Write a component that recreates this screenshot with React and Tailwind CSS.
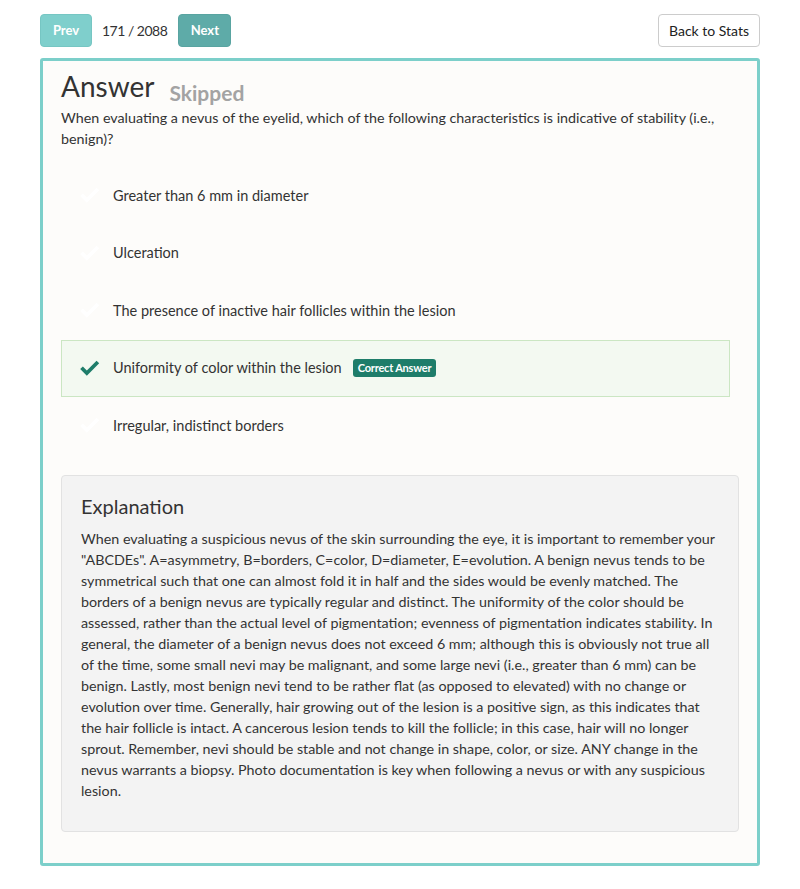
import React from "react";

const options = [
  "Greater than 6 mm in diameter",
  "Ulceration",
  "The presence of inactive hair follicles within the lesion",
  "Uniformity of color within the lesion",
  "Irregular, indistinct borders",
];

const explanation = [
  "When evaluating a suspicious nevus of the skin surrounding the eye, it is important to remember your",
  "\"ABCDEs\". A=asymmetry, B=borders, C=color, D=diameter, E=evolution. A benign nevus tends to be",
  "symmetrical such that one can almost fold it in half and the sides would be evenly matched. The",
  "borders of a benign nevus are typically regular and distinct. The uniformity of the color should be",
  "assessed, rather than the actual level of pigmentation; evenness of pigmentation indicates stability. In",
  "general, the diameter of a benign nevus does not exceed 6 mm; although this is obviously not true all",
  "of the time, some small nevi may be malignant, and some large nevi (i.e., greater than 6 mm) can be",
  "benign. Lastly, most benign nevi tend to be rather flat (as opposed to elevated) with no change or",
  "evolution over time. Generally, hair growing out of the lesion is a positive sign, as this indicates that",
  "the hair follicle is intact. A cancerous lesion tends to kill the follicle; in this case, hair will no longer",
  "sprout. Remember, nevi should be stable and not change in shape, color, or size. ANY change in the",
  "nevus warrants a biopsy. Photo documentation is key when following a nevus or with any suspicious",
  "lesion.",
];

function Check({ className }) {
  return (
    <svg viewBox="0 0 24 20" className={className} fill="currentColor">
      <path d="M2.2 10.6 L5 7.8 L9.2 12 L19.4 1.8 L22.2 4.6 L9.2 17.6 Z" />
    </svg>
  );
}

export default function App() {
  return (
    <div
      className="bg-white min-h-[889px] w-[800px] text-[#333]"
      style={{ fontFamily: "Lato, 'Open Sans', sans-serif" }}
    >
      <div className="px-10 pt-[14px]">
        <div className="flex items-center justify-between">
          <div className="flex items-center">
            <button className="h-[33px] w-[52px] rounded bg-[#7fcfcc] border border-[#76c6c3] text-white font-bold text-[13px]">
              Prev
            </button>
            <span className="ml-[10px] mr-[11px] text-[14px] tracking-[-0.5px]">171 / 2088</span>
            <button className="h-[33px] w-[53px] rounded bg-[#5eaba8] border border-[#59a4a1] text-white font-bold text-[13px]">
              Next
            </button>
          </div>
          <button className="h-[33px] w-[102px] rounded border border-[#cccccc] bg-white text-[14px] text-[#222]">
            Back to Stats
          </button>
        </div>

        <div className="mt-[11px] border-[3px] border-[#7ccfca] rounded-[3px] bg-[#fdfcfa] px-[18px] pt-[6px] pb-[31px]">
          <div className="flex items-end">
            <h1 className="text-[28px] leading-[38px] font-normal text-[#333]">Answer</h1>
            <span className="ml-[15px] mb-[-3px] text-[21px] font-bold text-[#a3a3a3] leading-[30px]">
              Skipped
            </span>
          </div>
          <p className="mt-[2px] text-[14.3px] leading-[21px] whitespace-nowrap">
            When evaluating a nevus of the eyelid, which of the following characteristics is indicative of stability (i.e.,
            <br />
            benign)?
          </p>

          <div className="mt-[18px] flex flex-col">
            {options.map((o, i) => {
              const correct = i === 3;
              return (
                <div
                  key={i}
                  className={
                    "flex items-center h-[57.5px] pl-[16px] w-[669px] " +
                    (correct
                      ? "bg-[#f3f9f1] border border-[#cbe6c3]"
                      : "border border-transparent")
                  }
                >
                  <Check
                    className={
                      "w-[23px] h-[19px] " +
                      (correct ? "text-[#1e7d6a]" : "text-[#ffffff]")
                    }
                  />
                  <span className="ml-[12px] text-[14.5px]">{o}</span>
                  {correct && (
                    <span className="ml-[11px] rounded-[3px] bg-[#1e7d6a] text-white text-[11px] font-bold px-[5px] py-[3px] leading-[12px] tracking-[-0.2px]">
                      Correct Answer
                    </span>
                  )}
                </div>
              );
            })}
          </div>

          <div className="mt-[20px] bg-[#f3f3f3] border border-[#e2e2e2] rounded-[4px] pl-[19px] pr-[10px] pt-[16px] pb-[30px]">
            <h2 className="text-[20px] leading-[28px] font-normal text-[#333]">Explanation</h2>
            <p className="mt-[8px] text-[14.3px] leading-[21px] whitespace-nowrap">
              {explanation.map((l, i) => (
                <span key={i} className="block">
                  {l}
                </span>
              ))}
            </p>
          </div>
        </div>
      </div>
    </div>
  );
}
